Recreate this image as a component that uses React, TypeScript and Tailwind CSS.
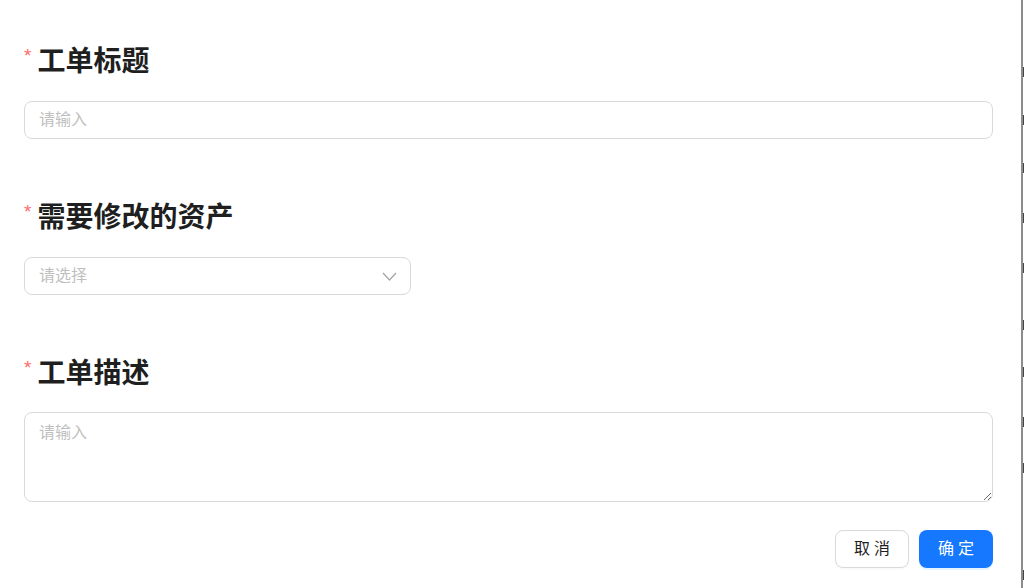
import { ReactNode } from "react";

const FONT = { fontFamily: '"Liberation Sans", "Noto Sans CJK SC", sans-serif' };

const Label = ({ children }: { children: ReactNode }) => (
  <div className="flex h-10 items-center">
    <span className="mr-[6px] -mt-[14px] text-[19px] leading-none text-[#ff6b6b]">*</span>
    <span className="text-[28px] font-bold leading-10 text-[#1f1f1f]">{children}</span>
  </div>
);

// stray glyph fragments of the page behind the dialog
const marks = [67, 115, 163, 213, 263, 320, 367, 417, 463, 570];

export default function App() {
  return (
    <div className="flex h-[588px] w-[1024px] overflow-hidden bg-white" style={FONT}>
      <div className="flex w-[1021px] flex-col pl-6 pr-7 pt-[42px]">
        <Label>工单标题</Label>
        <input
          type="text"
          placeholder="请输入"
          className="mt-[19px] h-[38px] w-full rounded-lg border border-[#d9d9d9] px-[14px] text-base text-[#1f1f1f] outline-none placeholder:text-[#bfbfbf]"
        />

        <div className="mt-[59px]">
          <Label>需要修改的资产</Label>
        </div>
        <div className="mt-[19px] flex h-[38px] w-[387px] items-center justify-between rounded-lg border border-[#d9d9d9] pl-[14px] pr-[13px]">
          <span className="text-base text-[#bfbfbf]">请选择</span>
          <svg width="15" height="9" viewBox="0 0 15 9" fill="none">
            <polyline points="1,1 7.5,8 14,1" stroke="#a6a6a6" strokeWidth="1.3" />
          </svg>
        </div>

        <div className="mt-[59px]">
          <Label>工单描述</Label>
        </div>
        <textarea
          placeholder="请输入"
          className="mt-[18px] h-[90px] w-full rounded-lg border border-[#d9d9d9] px-[14px] py-[8px] text-base text-[#1f1f1f] outline-none placeholder:text-[#bfbfbf]"
        />

        <div className="mt-7 flex justify-end gap-[10px]">
          <button className="h-[38px] w-[74px] rounded-lg border border-[#d9d9d9] bg-white pl-[4px] text-base tracking-[4px] text-[#1f1f1f] shadow-[0_2px_0_rgba(0,0,0,0.02)]">
            取消
          </button>
          <button className="h-[38px] w-[74px] rounded-lg bg-[#1677ff] pl-[4px] text-base tracking-[4px] text-white shadow-[0_2px_0_rgba(5,145,255,0.1)]">
            确定
          </button>
        </div>
      </div>
      <div className="w-[2px] bg-[#8c8c8c]" />
      <div className="relative w-[1px] bg-white">
        {marks.map((y) => (
          <div key={y} className="absolute left-0 h-[10px] w-[1px] bg-[#444]" style={{ top: y }} />
        ))}
      </div>
    </div>
  );
}
